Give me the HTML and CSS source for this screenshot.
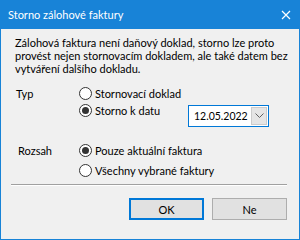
FILE: index.html
```html
<!DOCTYPE html>
<html lang="cs">
<head>
    <meta charset="UTF-8">
    <title>Storno zálohové faktury</title>
    <link rel="stylesheet" href="styles.css">
</head>
<body>
    <div class="window">
        <div class="titlebar">
            <span class="title">Storno zálohové faktury</span>
            <svg class="close" width="10" height="10" viewBox="0 0 10 10">
                <path d="M1 1 L9 9 M9 1 L1 9" stroke="#fff" stroke-width="1.2" fill="none"/>
            </svg>
        </div>
        <div class="content">
            <p class="message">Zálohová faktura není daňový doklad, storno lze proto<br>provést nejen stornovacím dokladem, ale také datem bez<br>vytváření dalšího dokladu.</p>

            <div class="group group-typ">
                <div class="label">Typ</div>
                <div class="options">
                    <label class="radio"><span class="dot"></span>Stornovací doklad</label>
                    <label class="radio checked"><span class="dot"></span>Storno k datu</label>
                </div>
                <div class="datebox">
                    <span class="date">12.05.2022</span>
                    <span class="drop">
                        <svg width="9" height="6" viewBox="0 0 9 6">
                            <path d="M0.5 0.5 L4.5 4.5 L8.5 0.5" stroke="#606060" stroke-width="1" fill="none"/>
                        </svg>
                    </span>
                </div>
            </div>

            <div class="group group-rozsah">
                <div class="label label-rozsah">Rozsah</div>
                <div class="options wide">
                    <label class="radio checked"><span class="dot"></span>Pouze aktuální faktura</label>
                    <label class="radio"><span class="dot"></span>Všechny vybrané faktury</label>
                </div>
            </div>
        </div>
        <div class="separator"></div>
        <div class="buttons">
            <button class="btn btn-default">OK</button>
            <button class="btn">Ne</button>
        </div>
    </div>
</body>
</html>
```

FILE: styles.css
```css
body {
    margin: 0;
    font-family: Lato, "Noto Sans", sans-serif;
    font-size: 11px;
    color: #000000;
}
.window {
    width: 300px;
    height: 240px;
    box-sizing: border-box;
    background-color: #f0f0f0;
    border: 1px solid #1883d7;
    border-top: none;
    display: flex;
    flex-direction: column;
}
.titlebar {
    height: 29px;
    background-color: #1883d7;
    color: #ffffff;
    display: flex;
    align-items: center;
    justify-content: space-between;
    padding: 0 8px 0 7px;
}
.title {
    font-size: 11px;
}
.close {
    margin-top: 1px;
}
.content {
    padding: 0 14px;
}
.message {
    margin: 7px 0 0 0;
    line-height: 13px;
    white-space: nowrap;
}
.group {
    display: flex;
    align-items: flex-start;
}
.label {
    width: 63px;
    flex: none;
    line-height: 17px;
    padding-left: 1px;
}
.group-typ {
    margin-top: 10px;
}
.group-rozsah {
    margin-top: 15px;
}
.label-rozsah {
    padding-left: 3px;
    width: 61px;
}
.options {
    display: flex;
    flex-direction: column;
    width: 109px;
    flex: none;
}
.options.wide {
    width: auto;
    gap: 3px;
}
.radio {
    display: flex;
    align-items: center;
    height: 17px;
    white-space: nowrap;
}
.dot {
    width: 11px;
    height: 11px;
    border: 1px solid #333333;
    border-radius: 50%;
    background-color: #ffffff;
    margin-right: 3px;
    flex: none;
    display: flex;
    align-items: center;
    justify-content: center;
}
.radio.checked .dot::after {
    content: "";
    width: 7px;
    height: 7px;
    border-radius: 50%;
    background-color: #333333;
}
.datebox {
    margin-top: 20px;
    width: 81px;
    height: 22px;
    flex: none;
    box-sizing: border-box;
    border: 1px solid #0078d7;
    background-color: #ffffff;
    display: flex;
    align-items: center;
    justify-content: space-between;
    padding: 1px;
}
.date {
    padding-left: 4px;
    font-size: 10.5px;
}
.drop {
    width: 16px;
    height: 18px;
    box-sizing: border-box;
    background-color: #e5e5e5;
    border: 1px solid #cccccc;
    display: flex;
    align-items: center;
    justify-content: center;
}
.separator {
    margin: 5px 12px 0 10px;
    height: 1px;
    background-color: #a0a0a0;
    border-bottom: 1px solid #ffffff;
}
.buttons {
    display: flex;
    justify-content: flex-end;
    gap: 8px;
    padding: 12px 12px 0 0;
}
.btn {
    width: 75px;
    height: 22px;
    box-sizing: border-box;
    background-color: #e1e1e1;
    border: 1px solid #adadad;
    font-family: Lato, "Noto Sans", sans-serif;
    font-size: 11px;
    color: #000000;
    padding: 0;
}
.btn-default {
    border: 2px solid #0078d7;
}
```
